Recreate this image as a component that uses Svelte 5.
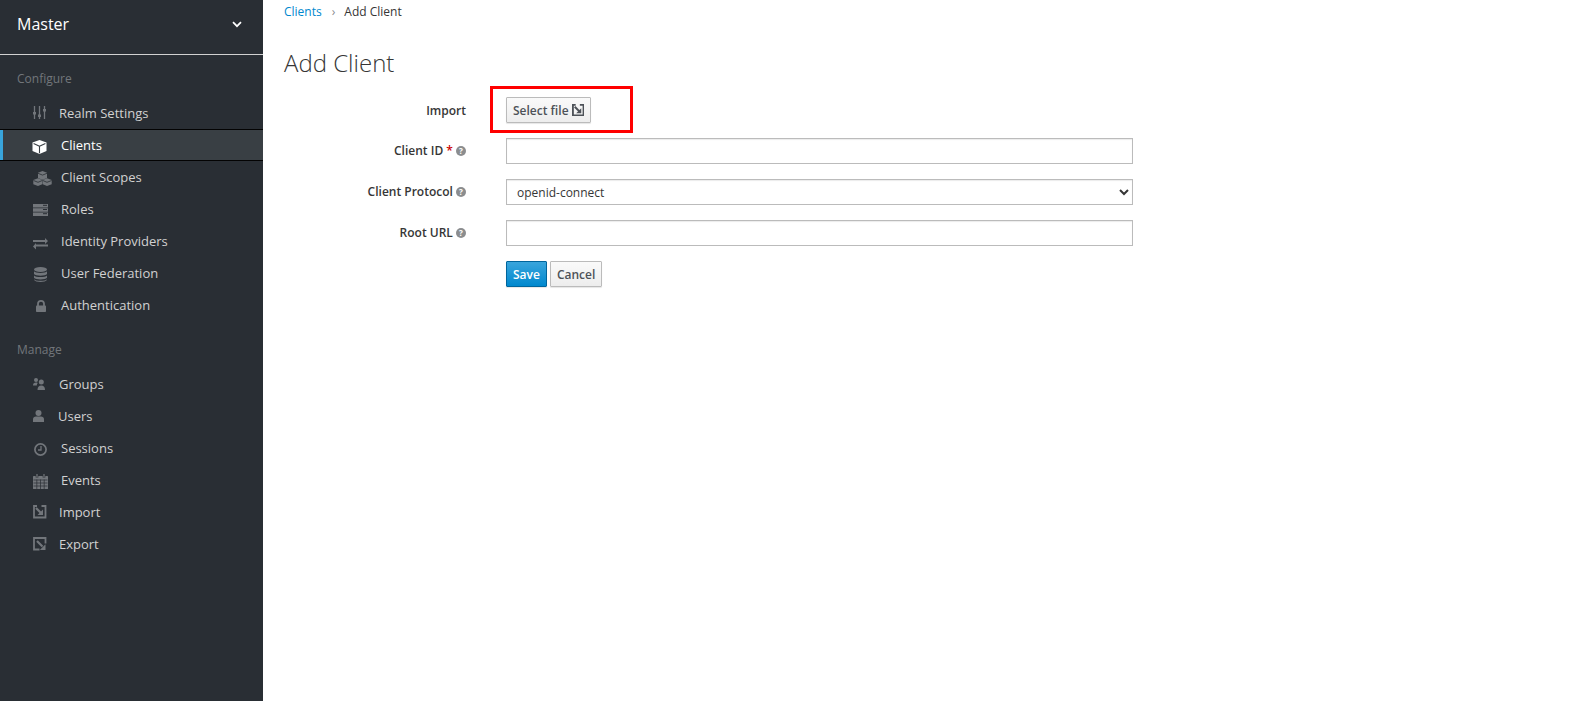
<script>
  const configure = [
    { label: 'Realm Settings', icon: 'sliders', gap: 59 },
    { label: 'Clients', icon: 'cube', gap: 61, active: true },
    { label: 'Client Scopes', icon: 'cubes', gap: 61 },
    { label: 'Roles', icon: 'server', gap: 61 },
    { label: 'Identity Providers', icon: 'exchange', gap: 61 },
    { label: 'User Federation', icon: 'database', gap: 61 },
    { label: 'Authentication', icon: 'lock', gap: 61 }
  ];
  const manage = [
    { label: 'Groups', icon: 'users', gap: 59 },
    { label: 'Users', icon: 'user', gap: 58 },
    { label: 'Sessions', icon: 'clock', gap: 61 },
    { label: 'Events', icon: 'calendar', gap: 61 },
    { label: 'Import', icon: 'import', gap: 59 },
    { label: 'Export', icon: 'export', gap: 59 }
  ];
  const sections = [
    { title: 'Configure', items: configure },
    { title: 'Manage', items: manage }
  ];
</script>

{#snippet icon(name)}
  <svg class="ico" viewBox="0 0 22 20" width="22" height="20" aria-hidden="true">
    {#if name === 'sliders'}
      <path d="M2.500 1v13M7.500 1v13M12.500 1v13" stroke="currentColor" stroke-width="1.300" fill="none"/>
      <path d="M1 7h3v2.500H1zM6 9.500h3V12H6zM11 4h3v2.500h-3z" fill="currentColor"/>
    {:else if name === 'cube'}
      <path d="M7.500 3 14.500 5.500V14L7.500 17 .5 14V5.500Z" fill="currentColor"/>
      <path d="M7.500 9.300 1.600 6.600M7.500 9.300 13.400 6.600M7.500 9.300V16.200" stroke="#393f44" stroke-width="1.100" fill="none"/>
    {:else if name === 'cubes'}
      <path d="M10.500 2 15 3.800V9L10.500 10.800 6 9V3.800ZM6 9.200 10.300 11V15.300L6 17 1.300 15.300V11ZM15 9.200 19.700 11V15.300L15 17 10.700 15.300V11Z" fill="currentColor"/>
      <path d="M6 4.300l4.500 1.800 4.500-1.800M1.500 11.500 6 13.300l4.300-1.800M10.800 11.500 15 13.300l4.700-1.800" stroke="#292e34" stroke-width=".8" fill="none"/>
    {:else if name === 'server'}
      <path d="M1 3h15v3.500H1zM1 7.300h15v3.400H1zM1 11.500h15V15H1z" fill="currentColor"/>
      <path d="M11 4.300h4M11 8.500h4M11 12.700h4" stroke="#292e34" stroke-width="1"/>
    {:else if name === 'exchange'}
      <path d="M1 7h12V5L16 8 13 11V9H1ZM16 11.500H4V10L1 13.500 4 16.500V13.500H16Z" fill="currentColor"/>
    {:else if name === 'database'}
      <ellipse cx="8.500" cy="4.500" rx="6.500" ry="2.500" fill="currentColor"/>
      <path d="M2 6.300C3.500 8.500 13.500 8.500 15 6.300V9C13.500 11.300 3.500 11.300 2 9ZM2 10.400C3.500 12.600 13.500 12.600 15 10.400V12.800C13.500 15 3.500 15 2 12.800ZM2 14.200C3.500 16.300 13.500 16.300 15 14.200V14.800C13.500 17.800 3.500 17.800 2 14.800Z" fill="currentColor"/>
    {:else if name === 'lock'}
      <path d="M6 9V6.800a3 3 0 0 1 6 0V9" stroke="currentColor" stroke-width="1.800" fill="none"/>
      <rect x="4" y="8.500" width="10" height="6.500" rx=".8" fill="currentColor"/>
    {:else if name === 'users'}
      <circle cx="4" cy="4" r="2" fill="currentColor"/>
      <path d="M1 9.500c0-2.200 1.200-3 3-3 .7 0 1.200.1 1.700.4-.6.700-.9 1.500-.9 2.600Z" fill="currentColor"/>
      <circle cx="9.300" cy="6" r="2.500" fill="currentColor"/>
      <path d="M5.500 14c0-3 1.300-4.500 3.800-4.500S13 11 13 14Z" fill="currentColor"/>
    {:else if name === 'user'}
      <circle cx="6.500" cy="5" r="3" fill="currentColor"/>
      <path d="M1 14v-2.500C1 9.500 2.300 8.600 4 8.600h5c1.700 0 3 .9 3 2.900V14Z" fill="currentColor"/>
    {:else if name === 'clock'}
      <circle cx="8.500" cy="9.500" r="5.600" stroke="currentColor" stroke-width="1.700" fill="none"/>
      <path d="M9 6v4H6" stroke="currentColor" stroke-width="1.300" fill="none"/>
    {:else if name === 'calendar'}
      <rect x="1" y="4" width="15" height="13" rx=".6" fill="currentColor"/>
      <path d="M1.500 8h14M1.500 11h14M1.500 14h14M4.800 7.500V17M8.500 7.500V17M12.200 7.500V17" stroke="#292e34" stroke-width=".7"/>
      <path d="M5 2v3.500M12 2v3.500" stroke="#292e34" stroke-width="2.600"/>
      <path d="M5 2v3.300M12 2v3.300" stroke="currentColor" stroke-width="1.200"/>
    {:else if name === 'import'}
      <path d="M5 2H2v11.500h11.500V2H9.500" stroke="currentColor" stroke-width="1.800" fill="none"/>
      <path d="M4 4 9.500 9.500" stroke="currentColor" stroke-width="2.200"/>
      <path d="M11 5.500V11H5.500Z" fill="currentColor"/>
    {:else if name === 'export'}
      <path d="M7.500 13.500H2V2h11.500v5.500" stroke="currentColor" stroke-width="1.800" fill="none"/>
      <path d="M5 5 10.500 10.500" stroke="currentColor" stroke-width="2.200"/>
      <path d="M13.500 8.300V14H7.800Z" fill="currentColor"/>
    {/if}
  </svg>
{/snippet}

{#snippet help()}
  <span class="help">?</span>
{/snippet}

<div class="page">
  <aside class="side">
    <div class="realm">
      <span>Master</span>
      <svg class="chev" viewBox="0 0 10 7" width="10" height="7"><path d="M1 1.200 5 5.200 9 1.200" stroke="#fff" stroke-width="1.700" fill="none"/></svg>
    </div>
    {#each sections as s}
      <h2 class="section">{s.title}</h2>
      <ul>
        {#each s.items as it}
          <li class:active={it.active}>
            <span class="slot">{@render icon(it.icon)}</span>
            <span class="lbl" style="left:{it.gap}px">{it.label}</span>
          </li>
        {/each}
      </ul>
    {/each}
  </aside>

  <main>
    <nav class="crumbs">
      <a href="#clients">Clients</a>
      <span class="sep">›</span>
      <span>Add Client</span>
    </nav>
    <h1>Add Client</h1>
    <form>
      <div class="row">
        <span class="label">Import</span>
        <div class="field">
          <button type="button" class="btn file">Select file
            <svg viewBox="1 1 13 13" width="12" height="12"><path d="M5 2H2v11.500h11.500V2H9.500" stroke="#4d5258" stroke-width="2" fill="none"/><path d="M4 4 9.500 9.500" stroke="#4d5258" stroke-width="2.200"/><path d="M11 5.500V11H5.500Z" fill="#4d5258"/></svg>
          </button>
          <span class="mark"></span>
        </div>
      </div>
      <div class="row">
        <span class="label up">Client ID <b>*</b> {@render help()}</span>
        <div class="field"><input type="text" /></div>
      </div>
      <div class="row">
        <span class="label up">Client Protocol {@render help()}</span>
        <div class="field">
          <select>
            <option>openid-connect</option>
          </select>
        </div>
      </div>
      <div class="row">
        <span class="label up">Root URL {@render help()}</span>
        <div class="field"><input type="text" /></div>
      </div>
      <div class="row">
        <span class="label"></span>
        <div class="field buttons">
          <button type="button" class="btn primary">Save</button>
          <button type="button" class="btn">Cancel</button>
        </div>
      </div>
    </form>
  </main>
</div>

<style>
  :global(body) { margin: 0; background: #fff; overflow: hidden; }
  .page { display: flex; height: 701px; font-family: "Open Sans", sans-serif; font-size: 12px; color: #363636; }
  .side { width: 263px; flex: none; background: #292e34; color: #fff; }
  .realm { height: 54px; border-bottom: 1px solid #d1d1d1; display: flex; justify-content: space-between; align-items: flex-start; padding: 0 17px; font-size: 16px; line-height: 48px; }
  .chev { margin: 21px 4px 0 0; }
  .section { margin: 0; padding: 15px 0 0 17px; height: 17px; font-size: 12px; line-height: 17px; font-weight: 400; color: #72767b; }
  ul { list-style: none; margin: 10px 0 5px; padding: 0; }
  li { position: relative; height: 32px; font-size: 13px; line-height: 32px; color: #d1d1d1; }
  li.active { background: #393f44; color: #fff; border-top: 1px solid #030303; border-bottom: 1px solid #030303; height: 30px; line-height: 30px; box-shadow: inset 3px 0 0 #39a5dc; }
  .slot { position: absolute; left: 32px; top: 8px; display: flex; color: #72767b; }
  li.active .slot { color: #fff; top: 7px; }
  .lbl { position: absolute; top: 0; white-space: nowrap; }
  main { flex: 1; padding: 0 0 0 21px; }
  .crumbs { height: 24px; line-height: 24px; display: flex; gap: 10px; }
  .crumbs a { color: #0088ce; text-decoration: none; }
  .sep { color: #8b8d8f; margin-right: -1px; }
  h1 { margin: 24px 0 0; font-size: 24px; line-height: 29px; font-weight: 300; color: #363636; }
  form { margin-top: 20px; }
  .row { display: flex; height: 26px; margin-bottom: 15px; align-items: center; }
  .label { width: 182px; margin-right: 40px; text-align: right; font-weight: 600; color: #363636; white-space: nowrap; }
  .label.up { margin-top: -2px; }
  .label b { color: #c00; font-weight: 600; }
  .help { display: inline-block; width: 10px; height: 10px; border-radius: 50%; background: #8b8d8f; color: #fff; font-size: 8px; line-height: 10px; text-align: center; font-weight: 700; vertical-align: 1px; }
  .field { position: relative; width: 627px; }
  input, select { display: block; width: 100%; height: 26px; box-sizing: border-box; border: 1px solid #bbb; background-color: #fff; margin: 0; padding: 2px 6px; box-shadow: inset 0 1px 1px rgba(3,3,3,.08); font: inherit; color: #363636; border-radius: 0; }
  .btn { height: 26px; box-sizing: border-box; padding: 0 6px; border: 1px solid #bbb; border-radius: 1px; background: linear-gradient(#fafafa, #ededed); font: inherit; font-weight: 600; color: #4d5258; box-shadow: 0 1px 1px rgba(3,3,3,.1); display: inline-flex; align-items: center; gap: 3px; }
  .primary { background: linear-gradient(#39a5dc, #0088ce); border-color: #00659c; color: #fff; }
  .buttons { display: flex; gap: 3px; }
  .mark { position: absolute; left: -16px; top: -11px; width: 143px; height: 47px; border: 3px solid #f00; box-sizing: border-box; pointer-events: none; }
</style>
